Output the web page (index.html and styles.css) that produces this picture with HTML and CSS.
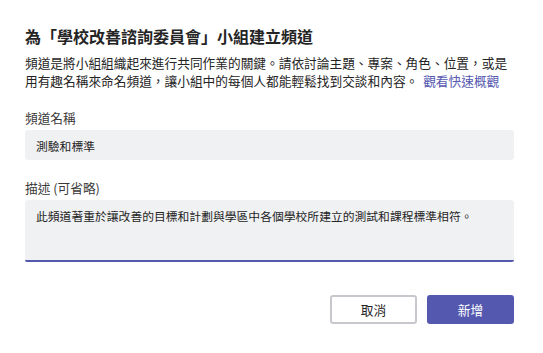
FILE: index.html
```html
<!DOCTYPE html>
<html lang="zh-Hant-TW">
<head>
  <meta charset="UTF-8" />
  <meta name="viewport" content="width=device-width, initial-scale=1.0"/>
  <title>建立頻道</title>
  <link rel="stylesheet" href="styles.css">
</head>
<body>

<div class="dialog">
  <h1>為「學校改善諮詢委員會」小組建立頻道</h1>

  <p class="intro">頻道是將小組組織起來進行共同作業的關鍵。請依討論主題、專案、角色、位置，或是用有趣名稱來命名頻道，讓小組中的每個人都能輕鬆找到交談和內容。 <a href="#">觀看快速概觀</a></p>

  <label for="name">頻道名稱</label>
  <input type="text" id="name" value="測驗和標準">

  <label for="desc">描述 (可省略)</label>
  <textarea id="desc">此頻道著重於讓改善的目標和計劃與學區中各個學校所建立的測試和課程標準相符。</textarea>

  <div class="actions">
    <button class="secondary">取消</button>
    <button class="primary">新增</button>
  </div>
</div>

</body>
</html>
```

FILE: styles.css
```css
* {
  box-sizing: border-box;
}
body {
  font-family: "Noto Sans CJK TC", sans-serif;
  background: #fff;
  color: #252424;
  margin: 0;
  padding: 25px 29px 0 25px;
}
.dialog {
  display: flex;
  flex-direction: column;
}
h1 {
  font-size: 16px;
  font-weight: 700;
  line-height: 22px;
  margin: 0;
}
.intro {
  font-size: 12.7px;
  line-height: 18px;
  margin: 7px 0 19px;
}
.intro a {
  color: #5558af;
  text-decoration: none;
  margin-left: 2px;
}
label {
  font-size: 12.7px;
  line-height: 18px;
  color: #3b3a39;
}
input, textarea {
  font-family: inherit;
  font-size: 11.8px;
  color: #252424;
  background: #f0f1f3;
  border: none;
  border-radius: 3px;
  margin: 3px 0 0;
  padding: 0 4px 0 11px;
  outline: none;
}
input {
  height: 30px;
  margin-bottom: 19px;
}
textarea {
  height: 62px;
  padding-top: 7px;
  line-height: 18px;
  overflow: hidden;
  resize: none;
  border-bottom: 2px solid #5558af;
  border-radius: 3px 3px 2px 2px;
}
.actions {
  display: flex;
  justify-content: flex-end;
  gap: 10px;
  margin-top: 33px;
}
button {
  width: 87px;
  height: 29px;
  border-radius: 3px;
  font-family: inherit;
  font-size: 12.7px;
  cursor: pointer;
}
.secondary {
  background: #fff;
  color: #252424;
  border: 2px solid #c6c8ce;
}
.primary {
  background: #5558af;
  color: #fff;
  border: none;
}
```
